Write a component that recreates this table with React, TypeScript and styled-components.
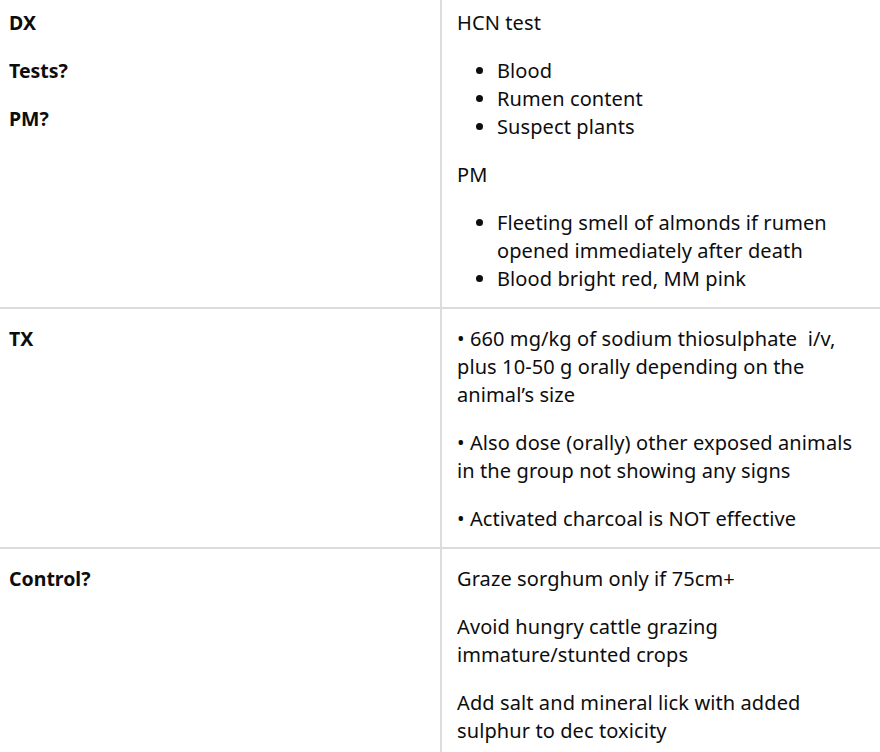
import React from "react";
import styled, { createGlobalStyle } from "styled-components";

const GlobalStyle = createGlobalStyle`
  html, body {
    margin: 0;
    padding: 0;
    background: #ffffff;
  }
  body {
    font-family: "Noto Sans", "Open Sans", sans-serif;
    color: #0d0d0d;
  }
`;

const Table = styled.div`
  display: flex;
  flex-direction: column;
  width: 880px;
`;

const TableRow = styled.div<{ $first?: boolean }>`
  display: grid;
  grid-template-columns: 442px 1fr;
  border-top: ${({ $first }) => ($first ? "none" : "2px solid #dcdcdc")};
  & > div {
    padding-top: ${({ $first }) => ($first ? "9px" : "16px")};
    padding-bottom: 14px;
  }
`;

const LabelCell = styled.div`
  padding-left: 9px;
  padding-right: 15px;
  border-right: 2px solid #dcdcdc;
`;

const BodyCell = styled.div`
  padding-left: 15px;
  padding-right: 15px;
`;

const Label = styled.p`
  margin: 0 0 20px;
  font-size: 19.5px;
  line-height: 28px;
  font-weight: 700;
  &:last-child {
    margin-bottom: 0;
  }
`;

const Para = styled.p`
  margin: 0 0 20px;
  font-size: 20px;
  line-height: 28px;
  letter-spacing: 0.1px;
  &:last-child {
    margin-bottom: 0;
  }
`;

const List = styled.ul`
  margin: 0 0 20px;
  padding-left: 40px;
  font-size: 20px;
  line-height: 28px;
  letter-spacing: 0.1px;
  &:last-child {
    margin-bottom: 0;
  }
`;

interface Row {
  label: string[];
  body: React.ReactNode;
}

const rows: Row[] = [
  {
    label: ["DX", "Tests?", "PM?"],
    body: (
      <>
        <Para>HCN test</Para>
        <List>
          <li>Blood</li>
          <li>Rumen content</li>
          <li>Suspect plants</li>
        </List>
        <Para>PM</Para>
        <List>
          <li>Fleeting smell of almonds if rumen opened immediately after death</li>
          <li>Blood bright red, MM pink</li>
        </List>
      </>
    ),
  },
  {
    label: ["TX"],
    body: (
      <>
        <Para>
          • 660 mg/kg of sodium thiosulphate&nbsp; i/v, plus 10-50 g orally depending on the
          animal’s size
        </Para>
        <Para>• Also dose (orally) other exposed animals in the group not showing any signs</Para>
        <Para>• Activated charcoal is NOT effective</Para>
      </>
    ),
  },
  {
    label: ["Control?"],
    body: (
      <>
        <Para>Graze sorghum only if 75cm+</Para>
        <Para>Avoid hungry cattle grazing immature/stunted crops</Para>
        <Para>Add salt and mineral lick with added sulphur to dec toxicity</Para>
      </>
    ),
  },
];

const App = () => (
  <>
    <GlobalStyle />
    <Table>
      {rows.map((row, i) => (
        <TableRow key={i} $first={i === 0}>
          <LabelCell>
            {row.label.map((l) => (
              <Label key={l}>{l}</Label>
            ))}
          </LabelCell>
          <BodyCell>{row.body}</BodyCell>
        </TableRow>
      ))}
    </Table>
  </>
);

export default App;
